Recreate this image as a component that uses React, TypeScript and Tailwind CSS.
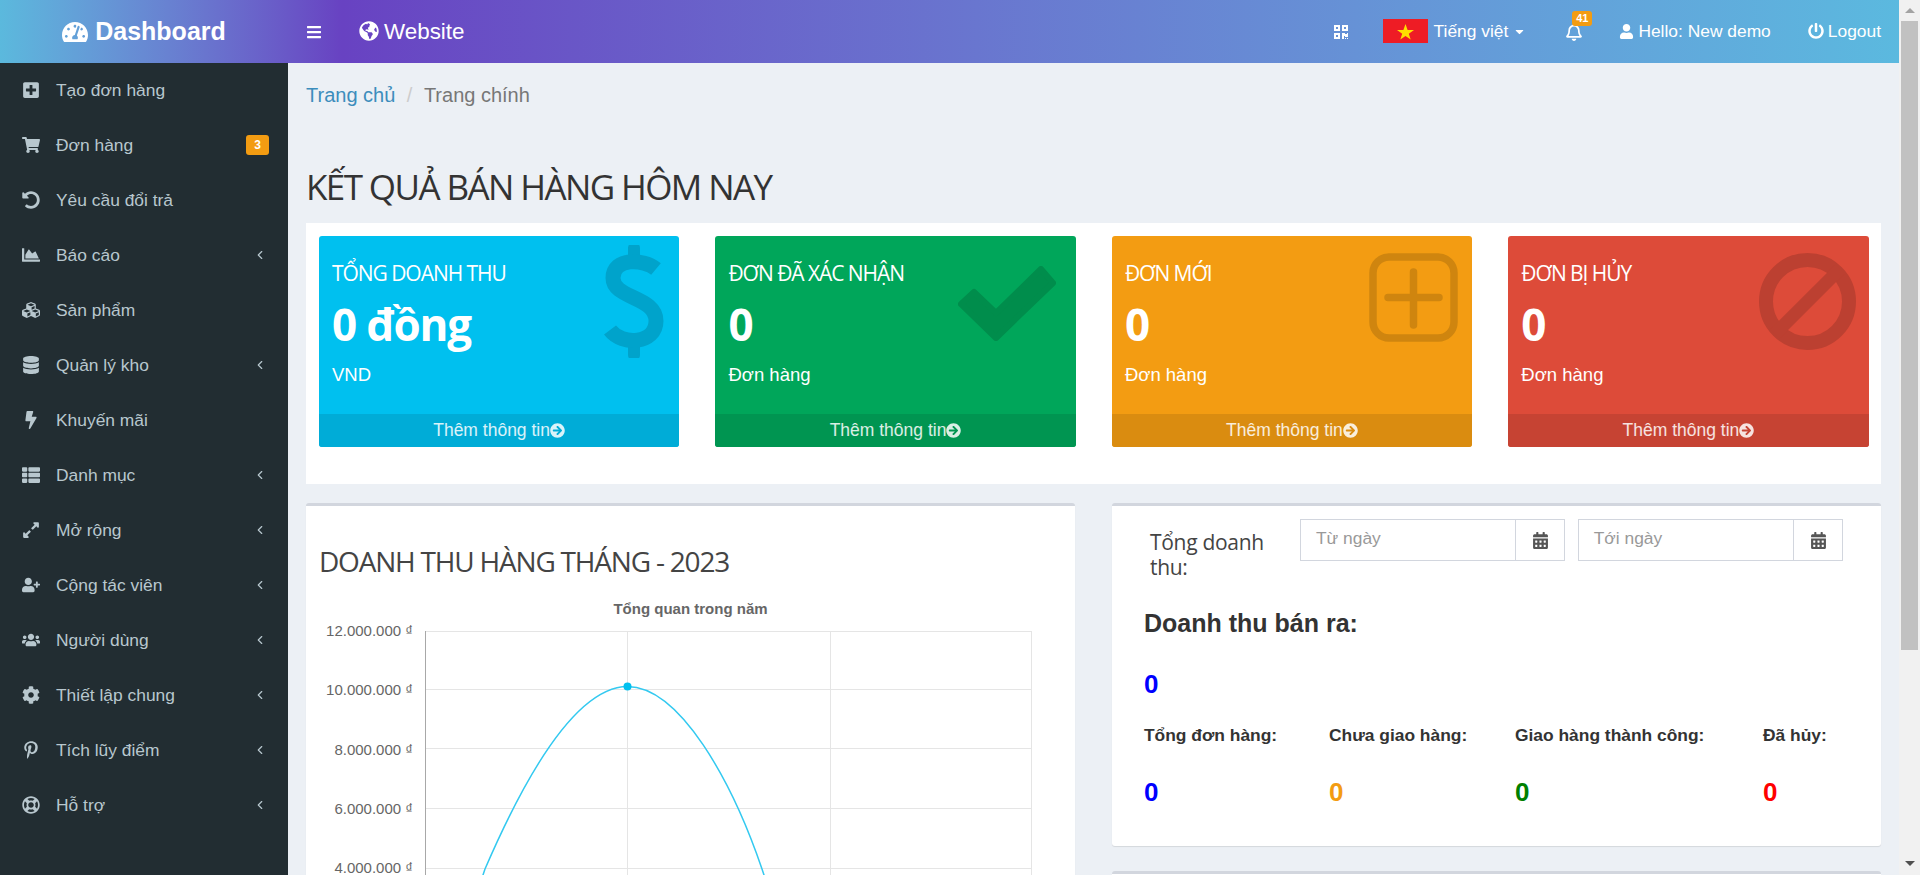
import { ChevronLeft } from 'lucide-react';
import type { ReactNode } from 'react';
import type { IconType } from 'react-icons';
import {
  FaArrowCircleRight,
  FaBars,
  FaBolt,
  FaCalendarAlt,
  FaCaretDown,
  FaChartArea,
  FaCog,
  FaCubes,
  FaDatabase,
  FaExpandAlt,
  FaGlobeAmericas,
  FaPinterestP,
  FaPlusSquare,
  FaPowerOff,
  FaQrcode,
  FaRegBell,
  FaRegLifeRing,
  FaShoppingCart,
  FaTachometerAlt,
  FaThList,
  FaUndoAlt,
  FaUser,
  FaUserPlus,
  FaUsers,
} from 'react-icons/fa';

const sans = 'font-["Liberation_Sans",Arial,sans-serif]';
const soft = 'font-["Open_Sans",sans-serif]';

const menu: { label: string; icon: IconType; arrow?: boolean; badge?: string }[] = [
  { label: 'Tạo đơn hàng', icon: FaPlusSquare },
  { label: 'Đơn hàng', icon: FaShoppingCart, badge: '3' },
  { label: 'Yêu cầu đổi trả', icon: FaUndoAlt },
  { label: 'Báo cáo', icon: FaChartArea, arrow: true },
  { label: 'Sản phẩm', icon: FaCubes },
  { label: 'Quản lý kho', icon: FaDatabase, arrow: true },
  { label: 'Khuyến mãi', icon: FaBolt },
  { label: 'Danh mục', icon: FaThList, arrow: true },
  { label: 'Mở rộng', icon: FaExpandAlt, arrow: true },
  { label: 'Cộng tác viên', icon: FaUserPlus, arrow: true },
  { label: 'Người dùng', icon: FaUsers, arrow: true },
  { label: 'Thiết lập chung', icon: FaCog, arrow: true },
  { label: 'Tích lũy điểm', icon: FaPinterestP, arrow: true },
  { label: 'Hỗ trợ', icon: FaRegLifeRing, arrow: true },
];

const stats: { title: string; value: string; unit: string; bg: string; foot: string; icon: ReactNode }[] = [
  {
    title: 'TỔNG DOANH THU',
    value: '0 đồng',
    unit: 'VND',
    bg: 'bg-[#00c0ef]',
    foot: 'bg-[#00acd7]',
    icon: (
      <svg viewBox="0 0 60 113" className="absolute right-[15px] top-[9px] h-[113px] w-[60px]" fill="none" stroke="#00a3cb">
        <path d="M30 3V16M30 97V110" strokeWidth="12" strokeLinecap="round" />
        <path d="M52 24C40 14 9 12 9 33C9 54 52 51 52 76C52 99 18 101 6 85" strokeWidth="15" />
      </svg>
    ),
  },
  {
    title: 'ĐƠN ĐÃ XÁC NHẬN',
    value: '0',
    unit: 'Đơn hàng',
    bg: 'bg-[#00a65a]',
    foot: 'bg-[#009551]',
    icon: (
      <svg viewBox="0 0 98 75" className="absolute right-[20px] top-[30px] h-[75px] w-[98px]">
        <polygon
          points="16,26 38,47 83,3 95,17 38,72 3,38"
          fill="#008d4c"
          stroke="#008d4c"
          strokeWidth="6"
          strokeLinejoin="round"
        />
      </svg>
    ),
  },
  {
    title: 'ĐƠN MỚI',
    value: '0',
    unit: 'Đơn hàng',
    bg: 'bg-[#f39c12]',
    foot: 'bg-[#da8c10]',
    icon: (
      <svg viewBox="0 0 89 89" className="absolute right-[14px] top-[17px] h-[89px] w-[89px]" fill="none" stroke="#cf850f">
        <rect x="4" y="4" width="81" height="81" rx="16" strokeWidth="7.5" />
        <path d="M44.5 19V72M19 44.5H70" strokeWidth="7.5" strokeLinecap="round" />
      </svg>
    ),
  },
  {
    title: 'ĐƠN BỊ HỦY',
    value: '0',
    unit: 'Đơn hàng',
    bg: 'bg-[#dd4b39]',
    foot: 'bg-[#c64333]',
    icon: (
      <svg viewBox="0 0 97 97" className="absolute right-[13px] top-[17px] h-[97px] w-[97px]" fill="none" stroke="#bc4031">
        <circle cx="48.5" cy="48.5" r="41.5" strokeWidth="14" />
        <path d="M16 81L81 16" strokeWidth="13" />
      </svg>
    ),
  },
];

const yLabels = ['12.000.000 ₫', '10.000.000 ₫', '8.000.000 ₫', '6.000.000 ₫', '4.000.000 ₫'];

function Sidebar() {
  return (
    <aside className="w-[288px] shrink-0 bg-[#222d32] pt-[1px] text-[#b8c7ce]">
      {menu.map((item) => (
        <div key={item.label} className="flex h-[55px] items-center pb-[3px] pl-[22px] pr-[20px] text-[17.4px]">
          <span className="flex w-[34px] shrink-0 items-center">
            <item.icon className="text-[18px]" />
          </span>
          <span className="flex-1">{item.label}</span>
          {item.badge && (
            <span className="mr-[-1px] flex h-[20px] w-[23px] items-center justify-center rounded-[3px] bg-[#f39c12] text-[12px] font-bold text-white">
              {item.badge}
            </span>
          )}
          {item.arrow && <ChevronLeft size={14} strokeWidth={2} className="mr-[1px]" />}
        </div>
      ))}
    </aside>
  );
}

function Header() {
  return (
    <header className="flex h-[63px] bg-gradient-to-r from-[#5bb9dd] via-[#6842c2] via-[18%] to-[#5bb9df] text-white">
      <div className="flex w-[288px] shrink-0 items-center justify-center gap-[7px] text-[25px] font-bold">
        <FaTachometerAlt className="text-[26px]" />
        Dashboard
      </div>
      <div className="flex flex-1 items-center pr-[18px] text-[17.4px]">
        <FaBars className="ml-[18px] text-[16px]" />
        <span className="ml-[37px] flex items-center gap-[5px] text-[22.4px]">
          <FaGlobeAmericas className="text-[20px]" />
          Website
        </span>
        <FaQrcode className="ml-auto text-[16px]" />
        <span className="ml-[34px] flex items-center">
          <svg viewBox="0 0 45 24" className="h-[24px] w-[45px]">
            <rect width="45" height="24" fill="#ee1c25" />
            <polygon points="22.5,5 24.6,11 31,11 25.8,14.8 27.7,20.6 22.5,17 17.3,20.6 19.2,14.8 14,11 20.4,11" fill="#ffe000" />
          </svg>
          <span className="ml-[6px]">Tiếng việt</span>
          <FaCaretDown className="ml-[5px] text-[13px]" />
        </span>
        <span className="relative ml-[39px] flex items-center">
          <FaRegBell className="text-[18px]" />
          <span className="absolute left-[7px] top-[-12px] flex h-[15px] w-[20px] items-center justify-center rounded-[3px] bg-[#f39c12] text-[11px] font-bold">41</span>
        </span>
        <span className="ml-[36px] flex items-center gap-[4px]">
          <FaUser className="text-[15px]" />
          Hello: New demo
        </span>
        <span className="ml-[37px] flex items-center gap-[4px]">
          <FaPowerOff className="text-[16px]" />
          Logout
        </span>
      </div>
    </header>
  );
}

function StatCards() {
  return (
    <section className="mx-[18px] grid grid-cols-4 gap-x-[36.3px] bg-white pb-[37px] pl-[13px] pr-[12.5px] pt-[13px]">
      {stats.map((s) => (
        <div key={s.title} className={`relative h-[211px] overflow-hidden rounded-[3px] text-white ${s.bg}`}>
          {s.icon}
          <div className="relative px-[13px]">
            <p className={`${soft} pt-[23px] text-[21px] leading-[28px] tracking-[-1.05px]`}>{s.title}</p>
            <p className={`${soft} mt-[9px] text-[44px] font-bold leading-[56px] tracking-[-1.2px]`}>{s.value}</p>
            <p className="mt-[10px] text-[18.5px] leading-[26px]">{s.unit}</p>
          </div>
          <div className={`absolute inset-x-0 bottom-0 flex h-[33px] items-center justify-center text-[17.5px] text-white/85 ${s.foot}`}>
            Thêm thông tin
            <FaArrowCircleRight className="text-[15px]" />
          </div>
        </div>
      ))}
    </section>
  );
}

function RevenueChart() {
  return (
    <div className="mt-[22px]">
      <p className="text-center text-[15px] font-bold leading-[16px] text-[#666]">Tổng quan trong năm</p>
      <div className="mt-[14px] flex">
        <div className="w-[106px] shrink-0 pr-[12px] text-right text-[15px] leading-[16px] text-[#666]">
          {yLabels.map((l) => (
            <div key={l} className="h-[59.3px] -translate-y-[8px]">{l}</div>
          ))}
        </div>
        <svg viewBox="0 0 607 262" className="h-[262px] w-[607px]" fill="none">
          <g stroke="#e5e5e5">
            <path d="M0 .5H607M0 58.5H607M0 117.5H607M0 177.5H607M0 237.5H607" />
            <path d="M202.5 0V262M405.5 0V262M606.5 0V262" />
          </g>
          <path d="M.5 0V262" stroke="#a8a8a8" />
          <path d="M52 262L60 238C98 150 150 56 202.5 55.5C255 56 307 150 337 238L345 262" stroke="#33c9f0" strokeWidth="1.5" />
          <circle cx="202.5" cy="55.5" r="4" fill="#00c0ef" />
        </svg>
      </div>
    </div>
  );
}

function DateInput({ label }: { label: string }) {
  return (
    <div className="flex h-[42px] border border-[#d2d6de] text-[17.4px]">
      <span className="flex flex-1 items-center pb-[3px] pl-[15px] text-[#999]">{label}</span>
      <span className="flex w-[49px] items-center justify-center border-l border-[#d2d6de] text-[#555]">
        <FaCalendarAlt className="text-[17px]" />
      </span>
    </div>
  );
}

function RevenueTotals() {
  const cols = [
    { label: 'Tổng đơn hàng:', color: 'text-[#0000ff]', w: 'w-[185px]' },
    { label: 'Chưa giao hàng:', color: 'text-[#f39c12]', w: 'w-[186px]' },
    { label: 'Giao hàng thành công:', color: 'text-[#008000]', w: 'w-[248px]' },
    { label: 'Đã hủy:', color: 'text-[#ff0000]', w: 'w-[80px]' },
  ];
  return (
    <div className="h-[343px] rounded-[3px] border-t-[3px] border-[#d2d6de] bg-white shadow-[0_1px_1px_rgba(0,0,0,0.1)]">
      <div className="flex pt-[13px]">
        <p className={`${soft} ml-[38px] mt-[11px] w-[150px] pr-[30px] text-[21px] leading-[25px] tracking-[-0.3px] text-[#444]`}>Tổng doanh thu:</p>
        <div className="grid h-[42px] w-[543px] grid-cols-2 gap-x-[12.5px]">
          <DateInput label="Từ ngày" />
          <DateInput label="Tới ngày" />
        </div>
      </div>
      <div className="px-[32px]">
        <p className="mt-[28px] text-[25px] font-bold leading-[30px] text-[#333]">Doanh thu bán ra:</p>
        <p className="mt-[31px] text-[26px] font-bold leading-[30px] text-[#0000ff]">0</p>
        <div className="mt-[25px] flex">
          {cols.map((c) => (
            <div key={c.label} className={`${c.w} shrink-0`}>
              <p className="text-[17.4px] font-bold leading-[22px] text-[#333]">{c.label}</p>
              <p className={`mt-[31px] text-[26px] font-bold leading-[30px] ${c.color}`}>0</p>
            </div>
          ))}
        </div>
      </div>
    </div>
  );
}

function Scrollbar() {
  return (
    <div className="flex w-[21px] shrink-0 flex-col items-center bg-[#f1f1f1]">
      <div className="flex h-[21px] w-full items-center justify-center">
        <span className="h-0 w-0 border-x-[5px] border-b-[5px] border-x-transparent border-b-[#a3a3a3]" />
      </div>
      <div className="h-[629px] w-[17px] bg-[#c1c1c1]" />
      <div className="mt-auto flex h-[24px] w-full items-center justify-center">
        <span className="h-0 w-0 border-x-[5px] border-t-[5px] border-x-transparent border-t-[#505050]" />
      </div>
    </div>
  );
}

export default function App() {
  return (
    <div className={`${sans} flex h-[875px] overflow-hidden bg-[#ecf0f5]`}>
      <div className="flex min-w-0 flex-1 flex-col">
        <Header />
        <div className="flex min-h-0 flex-1">
          <Sidebar />
          <main className="min-w-0 flex-1 overflow-hidden">
            <div className="flex items-center px-[18px] pt-[20px] text-[20px] leading-[24px]">
              <span className="text-[#3c8dbc]">Trang chủ</span>
              <span className="mx-[11.5px] text-[#ccc]">/</span>
              <span className="text-[#777]">Trang chính</span>
            </div>
            <h1 className={`${soft} mx-[18px] mt-[58px] h-[58px] text-[35px] leading-[44px] tracking-[-1.6px] text-[#333]`}>KẾT QUẢ BÁN HÀNG HÔM NAY</h1>
            <StatCards />
            <div className="mx-[18px] mt-[19px] grid grid-cols-2 gap-x-[37px]">
              <div className="h-[500px] rounded-[3px] border-t-[3px] border-[#d2d6de] bg-white px-[13px] shadow-[0_1px_1px_rgba(0,0,0,0.1)]">
                <h2 className={`${soft} mt-[37px] text-[28px] leading-[36px] tracking-[-1.2px] text-[#444]`}>DOANH THU HÀNG THÁNG - 2023</h2>
                <RevenueChart />
              </div>
              <div>
                <RevenueTotals />
                <div className="mt-[25px] h-[100px] rounded-[3px] border-t-[3px] border-[#d2d6de] bg-white" />
              </div>
            </div>
          </main>
        </div>
      </div>
      <Scrollbar />
    </div>
  );
}
